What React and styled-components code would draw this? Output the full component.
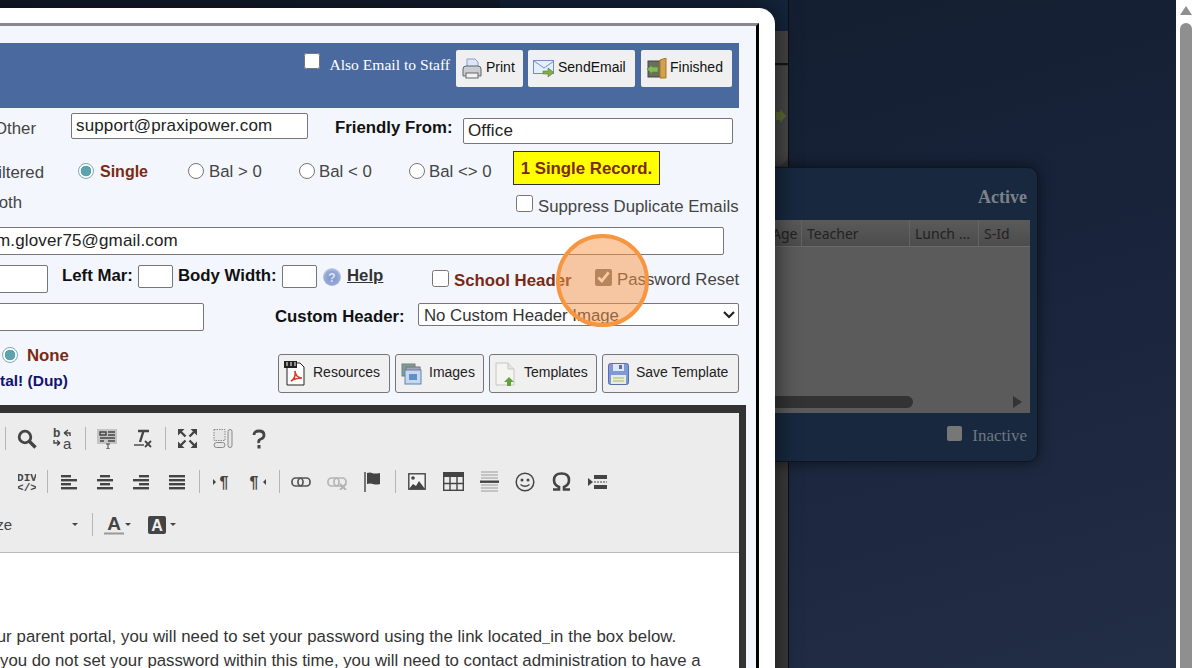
import React from "react"
import styled, { createGlobalStyle } from "styled-components"

const Global = createGlobalStyle`
html,body{margin:0;padding:0;height:100%;overflow:hidden;background:#fff;}
*{box-sizing:border-box;}
`

const Page = styled.div`
display:flex;
width:1196px;
height:668px;
overflow:hidden;
font-family:"Liberation Sans",Arial,sans-serif;
`
const Desktop = styled.div`
position:relative;
flex:1;
overflow:hidden;
background:linear-gradient(165deg,#111b2a 0%,#18233a 50%,#222e46 100%);
`
const PageBar = styled.div`
width:20px;
background:#fff;
padding:6px 4px 0;
display:flex;
flex-direction:column;
gap:8px;
`
const BarArrow = styled.div`
width:0;
height:0;
border-left:6px solid transparent;
border-right:6px solid transparent;
border-bottom:9px solid #8f8f8f;
`
const BarThumb = styled.div`
flex:1;
background:#8f8f8f;
border-radius:6px 6px 0 0;
`

/* the windows behind the dialog */
const BackPane = styled.div`
position:absolute;
left:500px;
top:0;
width:289px;
height:668px;
background:#3a3a3a;
border-right:1px solid #0a0f18;
display:flex;
flex-direction:column;
`
const BackHead = styled.div`height:31px;background:#14243a;`
const BackStrip = styled.div`height:34px;background:#444;border-bottom:2px solid #161616;`
const BackBody = styled.div`
height:100px;
margin-top:1px;
background:#474747;
border-radius:0 0 12px 0;
display:flex;
align-items:center;
justify-content:flex-end;
padding-right:2px;
`
const BackRest = styled.div`flex:1;`

const ListWin = styled.div`
position:absolute;
left:500px;
top:167px;
width:538px;
height:295px;
background:#18283f;
border:1px solid #0e1622;
border-radius:10px;
box-shadow:0 0 14px rgba(0,0,0,.55);
padding:19px 7px 0 0;
display:flex;
flex-direction:column;
`
const WinTitle = styled.div`
font:bold 18px "Liberation Serif",serif;
color:#7c8288;
text-align:right;
height:33px;
padding-right:3px;
`
const ListTable = styled.div`
height:193px;
background:#5b5b5b;
display:flex;
flex-direction:column;
`
const ListHead = styled.div`
height:27px;
display:flex;
justify-content:flex-end;
padding-right:3px;
background:linear-gradient(#5a5a5a,#4c4c4c);
border-bottom:1px solid #6a6a6a;
`
const HeadCell = styled.div`
width:${p => p.$w}px;
font:14px "Noto Sans",sans-serif;
color:#222;
padding:4px 0 0 ${p => p.$pl ?? 5}px;
border-left:1px solid #636363;
white-space:nowrap;
`
const ListBody = styled.div`flex:1;`
const ListScroll = styled.div`
height:17px;
display:flex;
align-items:flex-start;
`
const ListThumb = styled.div`
width:412px;
height:12px;
background:#333;
border-radius:0 6px 6px 0;
`
const ListArrow = styled.div`
margin-left:100px;
width:0;
height:0;
border-top:6px solid transparent;
border-bottom:6px solid transparent;
border-left:9px solid #333;
`
const WinFoot = styled.div`
display:flex;
justify-content:flex-end;
align-items:flex-start;
padding:13px 3px 0 0;
gap:10px;
font:17px/20px "Liberation Serif",serif;
color:#6f7681;
`
const GreyBox = styled.span`
width:15px;
height:15px;
border-radius:2px;
background:#777;
`

/* the dialog */
const Dialog = styled.div`
position:absolute;
left:-100px;
top:8px;
width:875px;
height:700px;
background:#fff;
border-radius:0 16px 0 0;
padding:15px 16px 0;
box-shadow:0 0 26px rgba(0,0,0,.6);
`
const Frame = styled.div`
height:700px;
background:#f3f7fd;
border-top:3px solid #88888c;
border-right:3px solid #000;
padding:17px 17px 0 0;
`
const BlueBar = styled.div`
height:65px;
background:#49699f;
display:flex;
justify-content:flex-end;
align-items:flex-start;
padding:7px 7px 0 0;
gap:5px;
`
const StaffCheck = styled.label`
display:flex;
align-items:flex-start;
gap:9px;
margin:3px 1px 0 0;
font:15.6px "Liberation Serif",serif;
color:#fff;
white-space:nowrap;
input{width:16px;height:16px;margin:0;}
span{margin-top:3px;}
`
const TopBtn = styled.button`
width:${p => p.$w}px;
height:37px;
margin-left:${p => p.$ml || 0}px;
background:#f0f0f0;
border:0;
border-radius:2px;
display:flex;
align-items:center;
gap:3px;
padding:0 0 3px 5px;
font:14px "Liberation Sans",sans-serif;
color:#111;
svg{margin-top:3px;}
`
const Row = styled.div`
display:flex;
align-items:flex-start;
height:${p => p.$h}px;
`
const Label = styled.div`
flex:none;
width:${p => p.$w}px;
margin-left:${p => p.$ml || 0}px;
margin-top:${p => p.$t || 0}px;
font-size:${p => p.$fs || 16.8}px;
font-weight:${p => p.$b ? "bold" : "normal"};
color:${p => p.$c || "#444"};
text-align:${p => p.$r ? "right" : "left"};
line-height:20px;
white-space:nowrap;
`
const Field = styled.input`
flex:none;
width:${p => p.$w}px;
height:${p => p.$h}px;
margin:${p => p.$t || 0}px 0 0 ${p => p.$ml || 0}px;
padding:0 0 0 ${p => p.$pl || 4}px;
border:1px solid #767676;
border-radius:2px;
background:#fff;
font:17px "Liberation Sans",sans-serif;
letter-spacing:.15px;
color:#222;
outline:0;
`
const Option = styled.label`
flex:none;
width:${p => p.$w}px;
margin-left:${p => p.$ml || 0}px;
margin-top:${p => p.$t || 0}px;
display:flex;
align-items:center;
gap:${p => p.$gap || 4}px;
height:20px;
font-size:${p => p.$fs || 16.8}px;
font-weight:${p => p.$on ? "bold" : "normal"};
color:${p => p.$on ? "#7a2a14" : "#444"};
white-space:nowrap;
input{
  appearance:none;
  width:16px;
  height:16px;
  margin:0 0 2px;
  flex:none;
  border-radius:50%;
  border:1px solid #767676;
  background:#fff;
}
input:checked{
  border-color:#7fa9b0;
  background:radial-gradient(circle,#5da3ad 0 5px,#fff 5.6px);
}
`
const Tick = styled.label`
flex:none;
width:${p => p.$w}px;
margin-left:${p => p.$ml || 0}px;
margin-top:${p => p.$t || 0}px;
display:flex;
align-items:flex-start;
gap:5px;
font-size:16.8px;
line-height:20px;
font-weight:${p => p.$b ? "bold" : "normal"};
color:${p => p.$c || "#444"};
white-space:nowrap;
input{width:17px;height:17px;margin:0;flex:none;accent-color:#757575;}
span{margin-top:${p => p.$st ?? 1}px;}
`
const Notice = styled.div`
flex:none;
width:147px;
height:34px;
margin:1px 0 0 20px;
padding-top:1px;
background:#ff0;
border:1px solid #333;
display:flex;
align-items:center;
justify-content:center;
font-size:16.8px;
font-weight:bold;
color:#7a2a14;
`
const HelpIcon = styled.span`
flex:none;
width:18px;
height:18px;
margin:10px 0 0 6px;
`
const HelpLink = styled.a`
flex:none;
width:85px;
margin:8px 0 0 6px;
font-size:16.8px;
font-weight:bold;
line-height:20px;
color:#333;
text-decoration:underline;
`
const PickerWrap = styled.div`
position:relative;
flex:none;
width:321px;
height:23px;
margin-top:3px;
`
const Picker = styled.select`
appearance:none;
width:100%;
height:100%;
border:1px solid #767676;
border-radius:2px;
background:#fff;
font:16.8px "Liberation Sans",sans-serif;
color:#333;
padding:1px 0 0 5px;
`
const Chevron = styled.svg`
position:absolute;
right:4px;
top:8px;
pointer-events:none;
`
const LeftCol = styled.div`
flex:none;
width:362px;
display:flex;
flex-direction:column;
`
const ToolBtns = styled.div`
display:flex;
gap:5px;
margin-top:14px;
`
const FileBtn = styled.button`
width:${p => p.$w}px;
height:39px;
background:#f0f0f0;
border:1px solid #767676;
border-radius:3px;
display:flex;
align-items:center;
gap:${p => p.$gap || 8}px;
padding:0 0 3px ${p => p.$pad || 5}px;
font:14px "Liberation Sans",sans-serif;
color:#222;
svg{margin-top:3px;}
`

/* text editor */
const Editor = styled.div`
margin-right:-7px;
height:400px;
background:#fff;
border-top:8px solid #333;
border-right:7px solid #333;
`
const ToolArea = styled.div`
background:#ececec;
border-bottom:1px solid #bbb;
height:140px;
padding-top:4px;
`
const ToolRow = styled.div`
display:flex;
align-items:center;
height:43px;
padding-left:${p => p.$pl}px;
`
const Tool = styled.span`
flex:none;
width:${p => p.$w || 36}px;
height:24px;
display:flex;
align-items:center;
justify-content:center;
`
const ToolSep = styled.span`
flex:none;
width:1px;
height:23px;
margin:0 3px 0 4px;
background:#b6b6b6;
`
const Combo = styled.span`
flex:none;
width:${p => p.$w}px;
display:flex;
align-items:center;
justify-content:space-between;
font:15px "Liberation Sans",sans-serif;
color:#444;
padding-right:10px;
`
const Caret = styled.span`
flex:none;
width:0;
height:0;
margin-left:${p => p.$ml || 0}px;
border-left:3px solid transparent;
border-right:3px solid transparent;
border-top:3px solid #444;
`
const Body = styled.div`
padding:72px 0 0;
font:16.8px/24px "Liberation Sans",sans-serif;
color:#333;
`
const Line = styled.div`
white-space:nowrap;
margin-left:${p => p.$ml}px;
letter-spacing:${p => p.$ls || 0}px;
`
const LinkGap = styled.span`
display:inline-block;
width:8px;
height:16px;
margin:0 0 -2px;
border-bottom:1.5px solid #6666c4;
`
const Spot = styled.div`
position:absolute;
left:556px;
top:234px;
width:93px;
height:93px;
border-radius:50%;
border:4px solid #f79640;
background:rgba(247,150,70,.5);
`

const Ico = ({ w = 20, h = 20, children }) => (
  <svg width={w} height={h} viewBox={`0 0 ${w} ${h}`} style={{ display: "block", flex: "none" }}>{children}</svg>
)

const PrintIco = () => (
  <Ico w={22} h={22}>
    <path d="M6 1h8l3 3v6H6z" fill="#dce6f8" stroke="#8aa0c8" />
    <path d="M2 11q0-3 3-3h12q3 0 3 3v7H2z" fill="#c9ccd1" stroke="#5d6670" />
    <rect x="5" y="15" width="12" height="5" fill="#f2f2f2" stroke="#666" />
  </Ico>
)
const MailIco = () => (
  <Ico w={22} h={19}>
    <rect x=".5" y="1.5" width="20" height="13" fill="#e6eefb" stroke="#6f8fc4" />
    <path d="M1 2l10 7 10-7" fill="none" stroke="#6f8fc4" />
    <path d="M10 12h5V9l6 4.500-6 4.500v-3h-5z" fill="#80ab4e" stroke="#5d7f35" strokeWidth=".6" />
  </Ico>
)
const DoorIco = () => (
  <Ico w={21} h={21}>
    <rect x="2" y="3" width="14" height="16" fill="#6a6f5c" stroke="#444" />
    <path d="M14 2l6-2v20l-6 0z" fill="#d5a04e" stroke="#a57427" />
    <path d="M1 11l5-4v2h6v5H6v2z" fill="#86b85a" stroke="#55803a" strokeWidth=".6" />
  </Ico>
)
const PdfIco = () => (
  <Ico w={22} h={25}>
    <path d="M3 2h13l4 4v18H3z" fill="#fff" stroke="#222" />
    <rect x="0" y="0" width="13" height="7" fill="#222" />
    <path d="M2 2h2M6 2h2M10 2h2M2 4h2M6 4h2M10 4h2" stroke="#fff" strokeWidth="1" />
    <path d="M7 20c3-1 5-6 4-10 0 4 3 7 7 7-4 0-8 1-11 3z" fill="none" stroke="#d63b2c" strokeWidth="1.600" />
  </Ico>
)
const ImagesIco = () => (
  <Ico w={22} h={22}>
    <rect x="1" y="1" width="13" height="12" fill="#7fa08c" stroke="#6c7f8a" />
    <rect x="5" y="4" width="14" height="13" fill="#a9a3b2" stroke="#77708a" />
    <rect x="4" y="7" width="16" height="14" fill="#c6d8ee" stroke="#5f82b4" />
    <rect x="8" y="11" width="8" height="6" fill="#5f90cc" />
  </Ico>
)
const TemplateIco = () => (
  <Ico w={21} h={24}>
    <path d="M1 1h12l6 6v16H1z" fill="#f4f4f0" stroke="#c6c6c6" />
    <path d="M13 1v6h6" fill="#e4e4e0" stroke="#c6c6c6" />
    <path d="M14 15l5 5h-3v4h-4v-4H9z" fill="#62a33c" />
  </Ico>
)
const SaveIco = () => (
  <Ico w={21} h={22}>
    <rect x=".5" y=".5" width="20" height="21" rx="2" fill="#7d99d8" stroke="#5470ad" />
    <rect x="5" y="1" width="11" height="7" fill="#dfe6f6" />
    <rect x="11" y="2" width="3" height="4" fill="#5470ad" />
    <rect x="3" y="12" width="15" height="9" fill="#e9ecd8" />
    <path d="M5 15h11M5 18h11" stroke="#9cbf6a" />
  </Ico>
)
const QuestionBall = () => (
  <Ico w={18} h={18}>
    <defs>
      <radialGradient id="ballFill" cx=".5" cy=".55" r=".55">
        <stop offset="0" stopColor="#7f95cd" />
        <stop offset=".7" stopColor="#94a8d6" />
        <stop offset="1" stopColor="#c3cfe8" />
      </radialGradient>
    </defs>
    <circle cx="9" cy="9" r="9" fill="url(#ballFill)" />
    <text x="9" y="13.500" textAnchor="middle" fontSize="12" fontWeight="bold" fontFamily="Liberation Sans" fill="#dfe6f5">?</text>
  </Ico>
)

const G = "#444"
const Search = () => (
  <Ico w={20} h={20}><circle cx="8" cy="8" r="5.800" fill="none" stroke={G} strokeWidth="2.800" /><path d="M12 12l6.500 6.500" stroke={G} strokeWidth="3.400" /></Ico>
)
const Replace = () => (
  <Ico w={22} h={22}>
    <text x="1" y="9" fontSize="12" fontWeight="bold" fontFamily="Liberation Sans" fill={G}>b</text>
    <text x="11" y="21" fontSize="15" fontFamily="Liberation Sans" fill={G}>a</text>
    <path d="M12 5l4-3M12 5l4 3M12 5h6v3M2 12v3h6M8 15l-3-2.500M8 15l-3 2.500" fill="none" stroke={G} strokeWidth="1.400" />
  </Ico>
)
const Selector = () => (
  <Ico w={20} h={20}>
    <rect width="20" height="15" fill="#c4c4c4" />
    <path d="M3 3h6v3H3zM11 3h7M11 6h7M3 9h15M3 12h4M11 12h7" stroke={G} strokeWidth="1.400" fill="none" />
    <path d="M9 15h4M11 15v5M9 20h4" stroke={G} strokeWidth="1" />
  </Ico>
)
const ClearFmt = () => (
  <Ico w={18} h={20}>
    <path d="M4 2h11M9.500 2L6 13" stroke={G} strokeWidth="2.400" fill="none" />
    <path d="M0 16h10" stroke={G} strokeWidth="1.400" />
    <path d="M11 12l6 6M17 12l-6 6" stroke={G} strokeWidth="1.800" />
  </Ico>
)
const Maximize = () => (
  <Ico w={19} h={19}>
    <g fill={G}>
      <path d="M0 0h6.500L0 6.500zM19 0h-6.500L19 6.500zM0 19h6.500L0 12.500zM19 19h-6.500L19 12.500z" />
    </g>
    <path d="M2 2l5.500 5.500M17 2l-5.500 5.500M2 17l5.500-5.500M17 17l-5.500-5.500" stroke={G} strokeWidth="2.400" />
  </Ico>
)
const Blocks = () => (
  <Ico w={20} h={20}>
    <rect x="1" y=".5" width="11" height="11" fill="#e6e6e6" stroke="#888" strokeDasharray="1.500 1" />
    <rect x="1" y="13.500" width="11" height="5" rx="2.500" fill="#e6e6e6" stroke="#888" />
    <rect x="15" y=".5" width="4" height="18" rx="2" fill="#e6e6e6" stroke="#888" />
  </Ico>
)
const HelpQ = () => (
  <Ico w={14} h={20}>
    <path d="M2 6q0-4 5-4t5 4q0 3-3 4t-2 4" fill="none" stroke={G} strokeWidth="2.800" />
    <rect x="5.500" y="16" width="3" height="3.500" fill={G} />
  </Ico>
)
const DivIco = () => (
  <Ico w={18} h={22}>
    <text x="9" y="9.500" textAnchor="middle" fontSize="11" fontWeight="bold" fontFamily="Liberation Mono" fill={G}>DIV</text>
    <text x="9" y="20" textAnchor="middle" fontSize="11" fontWeight="bold" fontFamily="Liberation Mono" fill={G}>{"</>"}</text>
  </Ico>
)
const Align = ({ kind }) => {
  const long = [0, 16]
  const short = kind === "l" ? [0, 10] : kind === "c" ? [3, 13] : kind === "r" ? [6, 16] : long
  const ys = [2, 6, 10, 14]
  return (
    <Ico w={16} h={16}>
      {ys.map((y, i) => {
        const r = i % 2 === 0 && kind !== "j" ? short : long
        return <rect key={y} x={r[0]} y={y - 1} width={r[1] - r[0]} height="2.400" fill={G} />
      })}
    </Ico>
  )
}
const Bidi = ({ rtl }) => (
  <Ico w={17} h={16}>
    <path d={rtl ? "M17 5l-3 3 3 3z" : "M0 5l3 3-3 3z"} fill={G} />
    <text x={rtl ? 5 : 11} y="14" textAnchor="middle" fontSize="16" fontWeight="bold" fontFamily="Liberation Sans" fill={G}>¶</text>
  </Ico>
)
const LinkIco = ({ off }) => (
  <Ico w={20} h={16}>
    <g fill="none" stroke={off ? "#b4b4b4" : "#555"} strokeWidth="1.700">
      <rect x="1" y="4" width="11" height="8" rx="3.500" />
      <rect x="7" y="4" width="12" height="8" rx="3.500" />
    </g>
    {off && <path d="M13 10l6 6M19 10l-6 6" stroke="#b4b4b4" strokeWidth="2" />}
  </Ico>
)
const Flag = () => (
  <Ico w={18} h={20}>
    <path d="M1 0v20" stroke={G} strokeWidth="1.400" />
    <path d="M3 1q3-1 5 0t8 0v11q-4 1-7 0t-6 0z" fill={G} />
  </Ico>
)
const ImageIco = () => (
  <Ico w={18} h={18}>
    <rect x=".8" y=".8" width="16.400" height="15.400" fill="#f2f2f2" stroke={G} strokeWidth="1.400" />
    <circle cx="5" cy="5" r="1.800" fill={G} />
    <path d="M1 16l4-5 3 2 3-5 6 8z" fill={G} />
  </Ico>
)
const TableIco = () => (
  <Ico w={21} h={19}>
    <rect x=".7" y=".7" width="19.600" height="17.600" fill="none" stroke={G} strokeWidth="1.400" />
    <rect x="0" y="0" width="21" height="5" fill={G} />
    <path d="M7 5v13M14 5v13M1 11.500h19" stroke={G} strokeWidth="1.400" />
  </Ico>
)
const HrIco = () => (
  <Ico w={19} h={21}>
    <path d="M1 1h17M1 4h17M1 7h17M1 14h17M1 17h17M1 20h17" stroke="#999" strokeWidth="1.200" />
    <rect x="0" y="9.500" width="19" height="2.400" fill={G} />
  </Ico>
)
const Smile = () => (
  <Ico w={20} h={20}>
    <circle cx="10" cy="10" r="8.800" fill="none" stroke={G} strokeWidth="1.500" />
    <circle cx="7" cy="8" r="1.500" fill={G} /><circle cx="13" cy="8" r="1.500" fill={G} />
    <path d="M5.500 12.500q4.500 3.500 9 0" fill="none" stroke={G} strokeWidth="1.300" />
  </Ico>
)
const Omega = () => (
  <Ico w={19} h={19}>
    <path d="M1 17.500h6v-2.500q-5-2-5-7 0-6.500 7.500-6.500t7.500 6.500q0 5-5 7v2.500h6" fill="none" stroke={G} strokeWidth="2.600" />
  </Ico>
)
const PageBreak = () => (
  <Ico w={19} h={16}>
    <path d="M0 4l5 4-5 4z" fill={G} />
    <rect x="6" y="1" width="13" height="4" fill={G} />
    <rect x="6" y="11" width="13" height="4" fill={G} />
    <path d="M6 8h13" stroke={G} strokeDasharray="2 1" />
  </Ico>
)
const ColorA = () => (
  <Ico w={20} h={20}>
    <text x="10" y="15" textAnchor="middle" fontSize="19" fontWeight="bold" fontFamily="Liberation Sans" fill={G}>A</text>
    <rect x="0" y="17.500" width="20" height="2" fill="#999" />
  </Ico>
)
const BgA = () => (
  <Ico w={18} h={18}>
    <rect width="18" height="18" rx="2" fill={G} />
    <text x="9" y="15" textAnchor="middle" fontSize="16" fontWeight="bold" fontFamily="Liberation Sans" fill="#f0f0f0">A</text>
  </Ico>
)

const App = () => (
  <Page>
    <Global />
    <Desktop>
      <BackPane>
        <BackHead />
        <BackStrip />
        <BackBody>
          <Ico w={10} h={14}><path d="M0 3h4V0l6 7-6 7v-3H0z" fill="#5c6a34" /></Ico>
        </BackBody>
        <BackRest />
      </BackPane>
      <ListWin>
        <WinTitle>Active</WinTitle>
        <ListTable>
          <ListHead>
            <HeadCell $w={30} $pl={0}>Age</HeadCell>
            <HeadCell $w={108}>Teacher</HeadCell>
            <HeadCell $w={69}>Lunch ...</HeadCell>
            <HeadCell $w={49}>S-Id</HeadCell>
          </ListHead>
          <ListBody />
          <ListScroll>
            <ListThumb />
            <ListArrow />
          </ListScroll>
        </ListTable>
        <WinFoot>
          <GreyBox />
          <span>Inactive</span>
        </WinFoot>
      </ListWin>
      <Dialog>
        <Frame>
          <BlueBar>
            <StaffCheck>
              <input type="checkbox" readOnly />
              <span>Also Email to Staff</span>
            </StaffCheck>
            <TopBtn $w={67}><PrintIco />Print</TopBtn>
            <TopBtn $w={107}><MailIco />SendEmail</TopBtn>
            <TopBtn $w={91} $ml={1}><DoorIco />Finished</TopBtn>
          </BlueBar>

          <Row $h={42}>
            <Label $ml={78} $w={77} $t={11}>Other</Label>
            <Field $w={237} $h={26} $t={5} defaultValue="support@praxipower.com" />
            <Label $ml={27} $w={128} $t={10} $b $c="#111">Friendly From:</Label>
            <Field $w={270} $h={26} $t={10} defaultValue="Office" />
          </Row>

          <Row $h={40}>
            <Label $w={128} $r $t={13}>Filtered</Label>
            <Option $ml={34} $w={110} $t={12} $on $gap={6} $fs={16}><input type="radio" name="who" defaultChecked />Single</Option>
            <Option $w={111} $t={12} $gap={5}><input type="radio" name="who" />Bal &gt; 0</Option>
            <Option $w={110} $t={12}><input type="radio" name="who" />Bal &lt; 0</Option>
            <Option $w={84} $t={12}><input type="radio" name="who" />Bal &lt;&gt; 0</Option>
            <Notice>1 Single Record.</Notice>
          </Row>

          <Row $h={35}>
            <Label $w={106} $r $t={3}>Both</Label>
            <Tick $ml={494} $w={223} $t={5} $st={2}><input type="checkbox" /><span>Suppress Duplicate Emails</span></Tick>
          </Row>

          <Row $h={33}>
            <Field $w={808} $h={28} $t={2} $pl={79} defaultValue="m.glover75@gmail.com" />
          </Row>

          <Row $h={42}>
            <Field $w={132} $h={28} $t={7} />
            <Label $ml={14} $w={76} $t={8} $b $c="#111">Left Mar:</Label>
            <Field $w={35} $h={23} $t={7} />
            <Label $ml={5} $w={104} $t={8} $b $c="#111">Body Width:</Label>
            <Field $w={35} $h={23} $t={7} />
            <HelpIcon><QuestionBall /></HelpIcon>
            <HelpLink>Help</HelpLink>
            <Tick $w={163} $t={12} $b $c="#7a2a14"><input type="checkbox" /><span>School Header</span></Tick>
            <Tick $w={144} $t={11}><input type="checkbox" defaultChecked /><span>Password Reset</span></Tick>
          </Row>

          <Row $h={40}>
            <Field $w={288} $h={28} $t={3} />
            <Label $ml={71} $w={143} $t={7} $b $c="#111">Custom Header:</Label>
            <PickerWrap>
              <Picker defaultValue="none"><option value="none">No Custom Header Image</option></Picker>
              <Chevron width="12" height="8" viewBox="0 0 12 8"><path d="M1 1l5 5 5-5" fill="none" stroke="#222" strokeWidth="2.200" /></Chevron>
            </PickerWrap>
          </Row>

          <Row $h={65}>
            <LeftCol>
              <Option $ml={86} $w={100} $t={6} $on $gap={9}><input type="radio" defaultChecked />None</Option>
              <Label $w={152} $r $t={5} $b $fs={15.5} $c="#14146e">Total! (Dup)</Label>
            </LeftCol>
            <ToolBtns>
              <FileBtn $w={112} $gap={7}><PdfIco />Resources</FileBtn>
              <FileBtn $w={89} $gap={6}><ImagesIco />Images</FileBtn>
              <FileBtn $w={108} $gap={8}><TemplateIco />Templates</FileBtn>
              <FileBtn $w={137} $gap={7}><SaveIco />Save Template</FileBtn>
            </ToolBtns>
          </Row>

          <Editor>
            <ToolArea>
              <ToolRow $pl={85}>
                <ToolSep />
                <Tool><Search /></Tool>
                <Tool><Replace /></Tool>
                <ToolSep />
                <Tool><Selector /></Tool>
                <Tool><ClearFmt /></Tool>
                <ToolSep />
                <Tool><Maximize /></Tool>
                <Tool><Blocks /></Tool>
                <Tool><HelpQ /></Tool>
              </ToolRow>
              <ToolRow $pl={95}>
                <Tool $w={32}><DivIco /></Tool>
                <ToolSep />
                <Tool><Align kind="l" /></Tool>
                <Tool><Align kind="c" /></Tool>
                <Tool><Align kind="r" /></Tool>
                <Tool><Align kind="j" /></Tool>
                <ToolSep />
                <Tool><Bidi /></Tool>
                <Tool><Bidi rtl /></Tool>
                <ToolSep />
                <Tool><LinkIco /></Tool>
                <Tool><LinkIco off /></Tool>
                <Tool><Flag /></Tool>
                <ToolSep />
                <Tool><ImageIco /></Tool>
                <Tool><TableIco /></Tool>
                <Tool><HrIco /></Tool>
                <Tool><Smile /></Tool>
                <Tool><Omega /></Tool>
                <Tool><PageBreak /></Tool>
              </ToolRow>
              <ToolRow $pl={67}>
                <Combo $w={105}>Size<Caret /></Combo>
                <ToolSep />
                <Tool><ColorA /></Tool>
                <Caret $ml={-7} />
                <Tool $w={52}><BgA /></Tool>
                <Caret $ml={-13} />
              </ToolRow>
            </ToolArea>
            <Body>
              <Line $ml={-17} $ls={0.06}>To access your parent portal, you will need to set your password using the link located<LinkGap />in the box below.</Line>
              <Line $ml={70}>If you do not set your password within this time, you will need to contact administration to have a</Line>
            </Body>
          </Editor>
        </Frame>
      </Dialog>
      <Spot />
    </Desktop>
    <PageBar>
      <BarArrow />
      <BarThumb />
    </PageBar>
  </Page>
)

export default App
